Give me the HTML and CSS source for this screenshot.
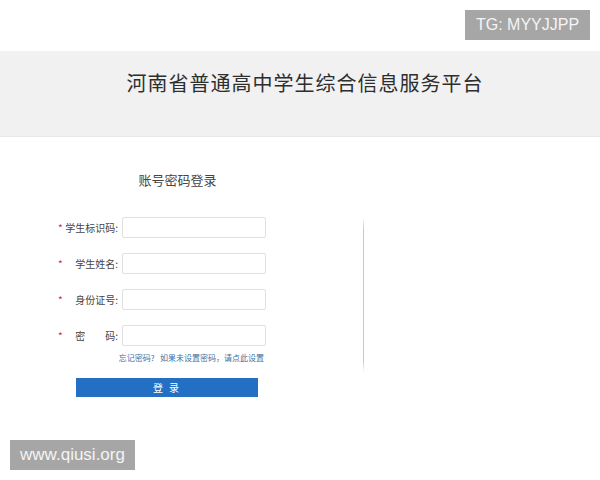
FILE: index.html
```html
<!DOCTYPE html>
<html lang="zh-CN">
<head>
    <meta charset="UTF-8">
    <title>河南省普通高中学生综合信息服务平台</title>
    <link rel="stylesheet" href="styles.css">
</head>
<body>

    <div class="top-space"></div>

    <div class="header">
        <h1 class="title">河南省普通高中学生综合信息服务平台</h1>
    </div>

    <div class="main">
        <div class="login">
            <h2 class="login-title">账号密码登录</h2>

            <div class="row">
                <label class="label" for="code"><span class="star">*</span><span>学生标识码:</span></label>
                <input type="text" id="code" class="field">
            </div>
            <div class="row">
                <label class="label" for="name"><span class="star">*</span><span>学生姓名:</span></label>
                <input type="text" id="name" class="field">
            </div>
            <div class="row">
                <label class="label" for="idcard"><span class="star">*</span><span>身份证号:</span></label>
                <input type="text" id="idcard" class="field">
            </div>
            <div class="row">
                <label class="label" for="pwd"><span class="star">*</span><span>密&emsp;&emsp;码:</span></label>
                <input type="password" id="pwd" class="field">
            </div>

            <div class="help">
                <a href="#">忘记密码?</a>&nbsp;&nbsp;&nbsp;<a href="#">如果未设置密码，请点此设置</a>
            </div>

            <button class="btn">登 录</button>
        </div>

        <div class="divider"></div>
    </div>

    <div class="mark mark-top">TG: MYYJJPP</div>
    <div class="mark mark-bottom">www.qiusi.org</div>

</body>
</html>
```

FILE: styles.css
```css
body {
    margin: 0;
    padding: 0;
    font-family: "Noto Sans CJK SC", "Noto Sans", sans-serif;
    background: #fff;
    color: #333;
    height: 480px;
    overflow: hidden;
}
.top-space {
    height: 51px;
}
.header {
    height: 85px;
    background: #f1f1f1;
    border-bottom: 1px solid #e8e8e8;
}
.title {
    margin: 0;
    padding: 17px 0 0 10px;
    font-size: 20px;
    font-weight: normal;
    letter-spacing: 1px;
    line-height: 30px;
    text-align: center;
    color: #2e2e2e;
}
.main {
    display: flex;
    padding-left: 55px;
}
.login {
    width: 245px;
}
.login-title {
    margin: 34px 0 28px;
    font-size: 13px;
    font-weight: normal;
    line-height: 18px;
    text-align: center;
    color: #444;
}
.row {
    display: flex;
    align-items: center;
    height: 21px;
    margin-bottom: 15px;
}
.label {
    display: flex;
    justify-content: space-between;
    width: 63px;
    margin-right: 4px;
    font-size: 10px;
    color: #444;
}
.star {
    color: #c0392b;
    padding-left: 3px;
}
.field {
    box-sizing: border-box;
    width: 144px;
    height: 21px;
    padding: 2px 4px;
    border: 1px solid #e0e0e0;
    border-radius: 2px;
    background: #fff;
}
.help {
    margin-top: -9px;
    padding-right: 36px;
    text-align: right;
    font-size: 8px;
    line-height: 12px;
}
.help a {
    color: #3f6f9f;
    text-decoration: none;
}
.btn {
    display: block;
    width: 182px;
    height: 19px;
    margin: 14px 0 0 21px;
    padding: 0;
    border: none;
    background-color: #226fc4;
    color: #fff;
    font-family: "Noto Sans CJK SC", sans-serif;
    font-size: 10px;
    letter-spacing: 2px;
    cursor: pointer;
}
.divider {
    width: 1px;
    height: 156px;
    margin: 80px 0 0 63px;
    background: linear-gradient(to bottom, rgba(200, 200, 200, 0), #c8c8c8 8%, #c8c8c8 92%, rgba(200, 200, 200, 0));
}
.mark {
    position: absolute;
    width: 125px;
    height: 30px;
    line-height: 30px;
    text-align: center;
    background: #a6a6a6;
    color: #f4f4f4;
    font-family: "Liberation Sans", Arial, sans-serif;
    font-size: 16px;
}
.mark-top {
    top: 10px;
    right: 10px;
}
.mark-bottom {
    left: 10px;
    top: 440px;
    font-size: 17px;
}
```
